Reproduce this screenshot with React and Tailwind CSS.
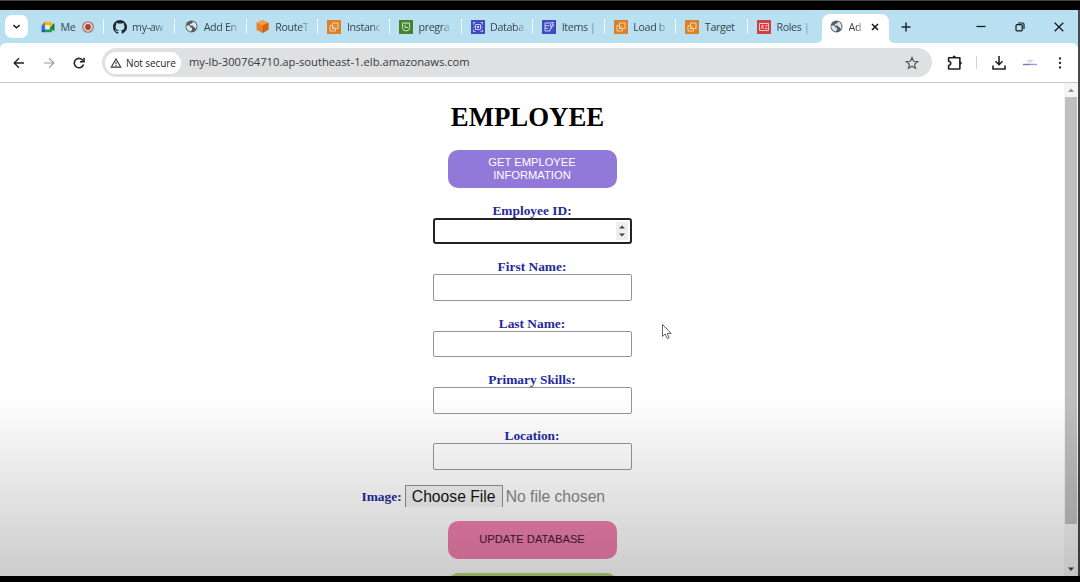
import React from "react";

const Globe = () => (
  <svg viewBox="0 0 24 24" className="size-[13px] shrink-0">
    <circle cx="12" cy="12" r="11" fill="#555b61" />
    <path d="M2.500 10h5l2.500 2.500v2h3v3.500l-2.500 3C5 20 2 15 2.500 10zM14 2.800v2.700l-2.500 1.500H9v3h6v3h2.500l1.500 3h1.500C23 10 20 4.500 14 2.800z" fill="#dceaf0" />
  </svg>
);

const Meet = () => (
  <svg viewBox="0 0 24 20" className="h-[12px] w-[14px]">
    <path d="M1 7 7 1v6z" fill="#e8483a" />
    <path d="M7 1h9v6H7z" fill="#f5bb13" />
    <path d="M1 7h6v7H1z" fill="#2c72dc" />
    <path d="M1 14h6v5H2.500Q1 19 1 17.500z" fill="#1c5bc4" />
    <path d="M7 14h8V8l4 2v7q0 2-2 2H7z" fill="#21994b" />
    <path d="M7 7h8v7H7z" fill="#dff0f5" />
    <path d="M15 10l7-6q1-1 1 1v11q0 2-1 1z" fill="#157c3d" />
    <path d="M15 2q4-1 4 2v4l-4 4z" fill="#eab71b" />
  </svg>
);

const Github = () => (
  <svg viewBox="0 0 16 16" className="size-[14px]" fill="#20272c">
    <path d="M8 0C3.580 0 0 3.580 0 8c0 3.540 2.290 6.530 5.470 7.590.4.070.55-.17.55-.38 0-.19-.01-.82-.01-1.490-2.010.37-2.530-.49-2.690-.94-.09-.23-.48-.94-.82-1.130-.28-.15-.68-.52-.01-.53.63-.01 1.080.58 1.230.82.72 1.210 1.870.87 2.330.66.070-.52.28-.87.51-1.070-1.780-.2-3.640-.89-3.640-3.950 0-.87.31-1.590.82-2.150-.08-.2-.36-1.020.08-2.120 0 0 .67-.21 2.200.82.64-.18 1.320-.27 2-.27s1.360.09 2 .27c1.530-1.040 2.200-.82 2.200-.82.44 1.100.16 1.920.08 2.120.51.56.82 1.270.82 2.150 0 3.070-1.870 3.750-3.650 3.950.29.25.54.73.54 1.480 0 1.070-.01 1.930-.01 2.200 0 .21.15.46.55.38A8 8 0 0 0 8 0z" />
  </svg>
);

const Cube = () => (
  <svg viewBox="0 0 24 24" className="size-[13px]">
    <path d="M12 0 23 5v13l-11 6L1 18V5z" fill="#e8812a" />
    <path d="M12 0 23 5l-11 5L1 5z" fill="#f5a04c" />
    <path d="M12 10v14l11-6V5z" fill="#cf6514" />
  </svg>
);

const Squares = () => (
  <svg viewBox="0 0 14 14" className="size-[14px]">
    <rect width="14" height="14" fill="#dc8128" />
    <path d="M5.500 3h5.500v5.500H5.500zM8.500 8.500V11H3V5.500h2.500M5.500 8.500l2.500-2.500" fill="none" stroke="#fbdcb4" strokeWidth=".9" />
  </svg>
);

const Green = () => (
  <svg viewBox="0 0 14 14" className="size-[14px]">
    <rect width="14" height="14" fill="#43822f" />
    <path d="M3.500 3h7v4.500a3.500 3.500 0 0 1-7 0zM6 5v2.500h3M7 3v1.500" fill="none" stroke="#dcefcf" strokeWidth=".9" />
  </svg>
);

const Vpc = () => (
  <svg viewBox="0 0 14 14" className="size-[14px]">
    <rect width="14" height="14" fill="#3f4bc0" />
    <path d="M4.500 4.500h5v5h-5zM2.500 4.500v-2h2M9.500 2.500h2v2M11.500 9.500v2h-2M4.500 11.500h-2v-2M2.500 7h2M9.500 7h2" fill="none" stroke="#cdd2fb" strokeWidth=".9" />
    <circle cx="7" cy="7" r="1.200" fill="#cdd2fb" />
  </svg>
);

const Dynamo = () => (
  <svg viewBox="0 0 14 14" className="size-[14px]">
    <rect width="14" height="14" fill="#3f4bc0" />
    <path d="M3 3h5M3 3v8h5V9M3 5.700h4M3 8.300h3M9 2.500h2.500L10 5h2L8.500 9l1-3H8z" fill="none" stroke="#dde0ff" strokeWidth=".9" />
  </svg>
);

const Iam = () => (
  <svg viewBox="0 0 14 14" className="size-[14px]">
    <rect width="14" height="14" fill="#cf3f43" />
    <path d="M2.500 3.500h9v7h-9zM4 9c0-2 3-2 3 0M8.500 5.500h2M8.500 8.500h2M8.500 7h1" fill="none" stroke="#ffd9d9" strokeWidth=".9" />
    <circle cx="5.500" cy="6" r="1" fill="#ffd9d9" />
  </svg>
);

const tabs = [
  { icon: Meet, title: "Me", recording: true },
  { icon: Github, title: "my-aw" },
  { icon: Globe, title: "Add En" },
  { icon: Cube, title: "RouteT" },
  { icon: Squares, title: "Instanc" },
  { icon: Green, title: "pregra" },
  { icon: Vpc, title: "Databa" },
  { icon: Dynamo, title: "Items |" },
  { icon: Squares, title: "Load b" },
  { icon: Squares, title: "Target", whole: true },
  { icon: Iam, title: "Roles |" },
];

function Tab({ icon: Icon, title, recording, whole, last }) {
  return (
    <div className="flex h-full w-[71.600px] shrink-0 items-center pl-[8.500px]">
      <span className="flex w-[15px] justify-center"><Icon /></span>
      {recording ? (
        <>
          <span className="ml-[5px] w-[16px] pt-px">{title}</span>
          <svg viewBox="0 0 12 12" className="ml-[5px] size-[12px]">
            <circle cx="6" cy="6" r="5.300" fill="none" stroke="#c4644f" strokeWidth="1.100" />
            <circle cx="6" cy="6" r="2.900" fill="#c23b22" />
          </svg>
        </>
      ) : (
        <span className={whole ? "ml-[5px] pt-px whitespace-nowrap" : "ml-[5px] pt-px whitespace-nowrap mask-r-from-75% mask-r-to-110%"}>{title}</span>
      )}
      {!last && <span className="ml-auto h-[15px] w-px bg-[#f2fbff]" />}
    </div>
  );
}

function TabStrip() {
  return (
    <div className="flex h-[33px] shrink-0 items-center bg-[#b8e0f1] text-[10.700px] tracking-[-0.350px] text-[#39464e]">
      <div className="ml-[5px] mr-[4px] flex h-[23px] w-[23px] shrink-0 items-center justify-center rounded-[7px] bg-white">
        <svg viewBox="0 0 10 10" className="size-[9px]" fill="none" stroke="#222" strokeWidth="1.700"><path d="m1.500 3.500 3.500 3 3.500-3" /></svg>
      </div>
      {tabs.map((t, i) => <Tab key={i} {...t} last={i === tabs.length - 1} />)}
      <div className="-ml-[4px] flex h-full shrink-0 items-end">
        <svg viewBox="0 0 6 6" className="size-[6px]"><path d="M6 0v6H0Q6 6 6 0z" fill="#fff" /></svg>
        <div className="flex h-[29px] w-[67px] items-center rounded-t-[8px] bg-white pb-[4px] pl-[8px]">
          <Globe />
          <span className="ml-[6px] w-[14px] pt-px mask-r-from-60% mask-r-to-110%">Ad</span>
          <svg viewBox="0 0 8 8" className="ml-[8px] size-[8px]" stroke="#151515" strokeWidth="1.500"><path d="m1 1 6 6M7 1 1 7" /></svg>
        </div>
        <svg viewBox="0 0 6 6" className="size-[6px]"><path d="M0 0v6h6Q0 6 0 0z" fill="#fff" /></svg>
      </div>
      <svg viewBox="0 0 10 10" className="ml-[6px] size-[10px] shrink-0" stroke="#20282c" strokeWidth="1.500"><path d="M5 .5v9M.5 5h9" /></svg>
      <div className="ml-auto mr-[14px] flex items-center gap-[29px]">
        <svg viewBox="0 0 10 10" className="size-[10px]" stroke="#15191b" strokeWidth="1.300"><path d="M.5 4.500h9" /></svg>
        <svg viewBox="0 0 10 10" className="size-[10px]" fill="none" stroke="#15191b" strokeWidth="1.200"><rect x="1" y="2.700" width="6.200" height="6.200" rx="1" /><path d="M3 1h4.500Q9 1 9 2.500V7" /></svg>
        <svg viewBox="0 0 10 10" className="size-[10px]" stroke="#15191b" strokeWidth="1.300"><path d="m.7.7 8.600 8.600M9.300.7.7 9.300" /></svg>
      </div>
    </div>
  );
}

function Toolbar() {
  return (
    <div className="bg-[#b8e0f1]">
      <div className="flex h-[40px] items-center rounded-t-[6px] border-b border-[#c9c9c9] bg-white">
        <svg viewBox="0 0 12 12" className="ml-[13px] size-[12px]" fill="none" stroke="#222" strokeWidth="1.400"><path d="M11 6H1.500M6 1.200 1.200 6 6 10.800" /></svg>
        <svg viewBox="0 0 12 12" className="ml-[18px] size-[12px]" fill="none" stroke="#9a9a9a" strokeWidth="1.200"><path d="M1 6h9.500M6 1.200 10.800 6 6 10.800" /></svg>
        <svg viewBox="0 0 12 12" className="ml-[18px] size-[12px]" fill="none" stroke="#222" strokeWidth="1.600"><path d="M10.500 7.500A4.700 4.700 0 1 1 10 3.600" /><path d="M11 .8v4H7" /></svg>
        <div className="ml-[17px] flex h-[29px] w-[830px] items-center rounded-full bg-[#dfe0e1] pl-[3px]">
          <div className="flex h-[22px] w-[76px] items-center rounded-full bg-white pl-[5px]">
            <svg viewBox="0 0 12 11" className="h-[10px] w-[12px] shrink-0" fill="none" stroke="#333" strokeWidth="1.200"><path d="M6 1 11.200 10H.8z" /><path d="M6 4.200v2.800M6 7.800v1" /></svg>
            <span className="ml-[4px] pt-px whitespace-nowrap text-[10px] font-medium tracking-[-0.100px] text-[#242424]">Not secure</span>
          </div>
          <span className="ml-[8px] whitespace-nowrap text-[11.200px] text-[#37393b]">my-lb-300764710.ap-southeast-1.elb.amazonaws.com</span>
          <svg viewBox="0 0 14 14" className="ml-auto mr-[13px] size-[14px]" fill="none" stroke="#55585a" strokeWidth="1.200"><path d="m7 1.500 1.600 3.800 4.100.3-3.100 2.700.9 4L7 10.200l-3.500 2.100.9-4-3.100-2.700 4.100-.3z" /></svg>
        </div>
        <svg viewBox="0 0 14 14" className="ml-[15px] size-[15px]" fill="none" stroke="#222" strokeWidth="1.500"><path d="M1.500 2.500h10.500v10.500H1.500V9.800q2-.3 2-2t-2-2z" strokeLinejoin="round" /><path d="M5.200 2q1.500-2.500 3 0zM12.500 6.200q2.300 1.300 0 2.800z" fill="#222" strokeWidth=".6" /></svg>
        <span className="ml-[14px] h-[13px] w-px bg-[#bed8e4]" />
        <svg viewBox="0 0 14 14" className="ml-[15px] size-[14px]" fill="none" stroke="#222" strokeWidth="1.600"><path d="M7 0v8.500M3.500 5.200 7 8.700l3.500-3.500M1 9.500V13h12V9.500" /></svg>
        <svg viewBox="0 0 14 8" className="ml-[17px] h-[8px] w-[14px]">
          <path d="M4 1.500h6M5 3h4" stroke="#c3cbf0" />
          <path d="M0 5.500h7" stroke="#777aa8" strokeWidth="1.400" /><path d="M7 5.500h7" stroke="#8fa1e2" strokeWidth="1.400" />
        </svg>
        <svg viewBox="0 0 4 14" className="ml-[21px] h-[14px] w-[4px]" fill="#222"><circle cx="2" cy="2.500" r="1.150" /><circle cx="2" cy="7" r="1.150" /><circle cx="2" cy="11.500" r="1.150" /></svg>
      </div>
    </div>
  );
}

function Field({ label, focused }) {
  return (
    <div className="flex h-[56.400px] flex-col items-center">
      <label className="h-[15px] text-[13.400px] leading-[15px] font-bold">{label}</label>
      {focused ? (
        <div className="flex h-[26.600px] w-[199px] shrink-0 items-center justify-end rounded-[3px] border-2 border-[#222] bg-white pr-[2px]">
          <div className="flex h-[18px] w-[12px] items-center justify-center bg-[#efefef]">
            <svg viewBox="0 0 8 12" className="h-[12px] w-[8px]" fill="#444"><path d="m1 3.500 3-3 3 3zM1 8.500l3 3 3-3z" /></svg>
          </div>
        </div>
      ) : (
        <div className="h-[26.600px] w-[199px] shrink-0 rounded-[2px] border border-[#959595] bg-white" />
      )}
    </div>
  );
}

function EmployeeForm() {
  return (
    <div className="flex min-w-0 flex-1 flex-col items-center overflow-hidden font-['Liberation_Serif',serif] text-[#1f2a9c]">
      <h1 className="mt-[19px] mr-[9px] h-[30px] text-[26.800px] leading-[30px] font-bold text-black">EMPLOYEE</h1>
      <button className="mt-[18px] h-[38px] w-[169px] shrink-0 rounded-[10px] bg-[#9079d9] px-[30px] font-['Liberation_Sans',sans-serif] text-[11.200px] leading-[13px] text-white">
        GET EMPLOYEE INFORMATION
      </button>
      <div className="mt-[14.800px]">
        <Field label="Employee ID:" focused />
        <Field label="First Name:" />
        <Field label="Last Name:" />
        <Field label="Primary Skills:" />
        <Field label="Location:" />
      </div>
      <div className="mt-[0.200px] mr-[5px] flex h-[22px] w-[336px] shrink-0 items-center self-center">
        <span className="mt-[3px] text-[13.400px] font-bold">Image:</span>
        <div className="ml-[3px] flex h-[22px] w-[98px] items-center justify-center overflow-hidden border border-b-0 border-[#909090] bg-[#f3f3f3] font-['Liberation_Sans',sans-serif] text-[15.700px] whitespace-nowrap text-[#151515]">Choose File</div>
        <span className="mt-px ml-[3px] font-['Liberation_Sans',sans-serif] text-[15.700px] whitespace-nowrap text-[#888]">No file chosen</span>
      </div>
      <button className="mt-[14px] h-[38px] w-[169px] shrink-0 rounded-[10px] bg-[#f080ae] pb-[2px] font-['Liberation_Sans',sans-serif] text-[11.200px] text-[#401a31]">UPDATE DATABASE</button>
      <div className="mt-[14.500px] h-[38px] w-[169px] shrink-0 rounded-[10px] bg-[#b6d77a]" />
    </div>
  );
}

function Scrollbar() {
  return (
    <div className="flex w-[14px] shrink-0 flex-col items-center bg-[#f4f4f4]">
      <svg viewBox="0 0 14 14" className="size-[14px] shrink-0" fill="#909090"><path d="m4 9 3-3.500 3 3.500z" /></svg>
      <div className="h-[427px] w-[12px] shrink-0 bg-[#bfbfbf]" />
      <svg viewBox="0 0 14 14" className="mt-auto size-[14px] shrink-0" fill="#444"><path d="m4 5.500 3 3.500 3-3.500z" /></svg>
    </div>
  );
}

export default function App() {
  return (
    <div className="relative flex h-[582px] w-[1080px] flex-col overflow-hidden border-t border-[#444] bg-black font-['Open_Sans','Noto_Sans',sans-serif]">
      <div className="h-[9px] shrink-0" />
      <div className="flex h-[566px] shrink-0 border-r-2 border-[#484848]">
        <div className="flex min-w-0 flex-1 flex-col">
          <TabStrip />
          <Toolbar />
          <div className="flex min-h-0 flex-1 bg-white">
            <EmployeeForm />
            <Scrollbar />
          </div>
        </div>
      </div>
      <div className="pointer-events-none absolute inset-x-0 top-[394px] h-[181px] bg-linear-to-b from-black/0 to-black/20" />
      <svg viewBox="0 0 12 17" className="absolute top-[322px] left-[661px] h-[17px] w-[12px]" fill="#fff" stroke="#555" strokeWidth=".9"><path d="M1.500 1.500v12l2.700-2.500 2 4.500 2-.9-2-4.200h4z" /></svg>
    </div>
  );
}
